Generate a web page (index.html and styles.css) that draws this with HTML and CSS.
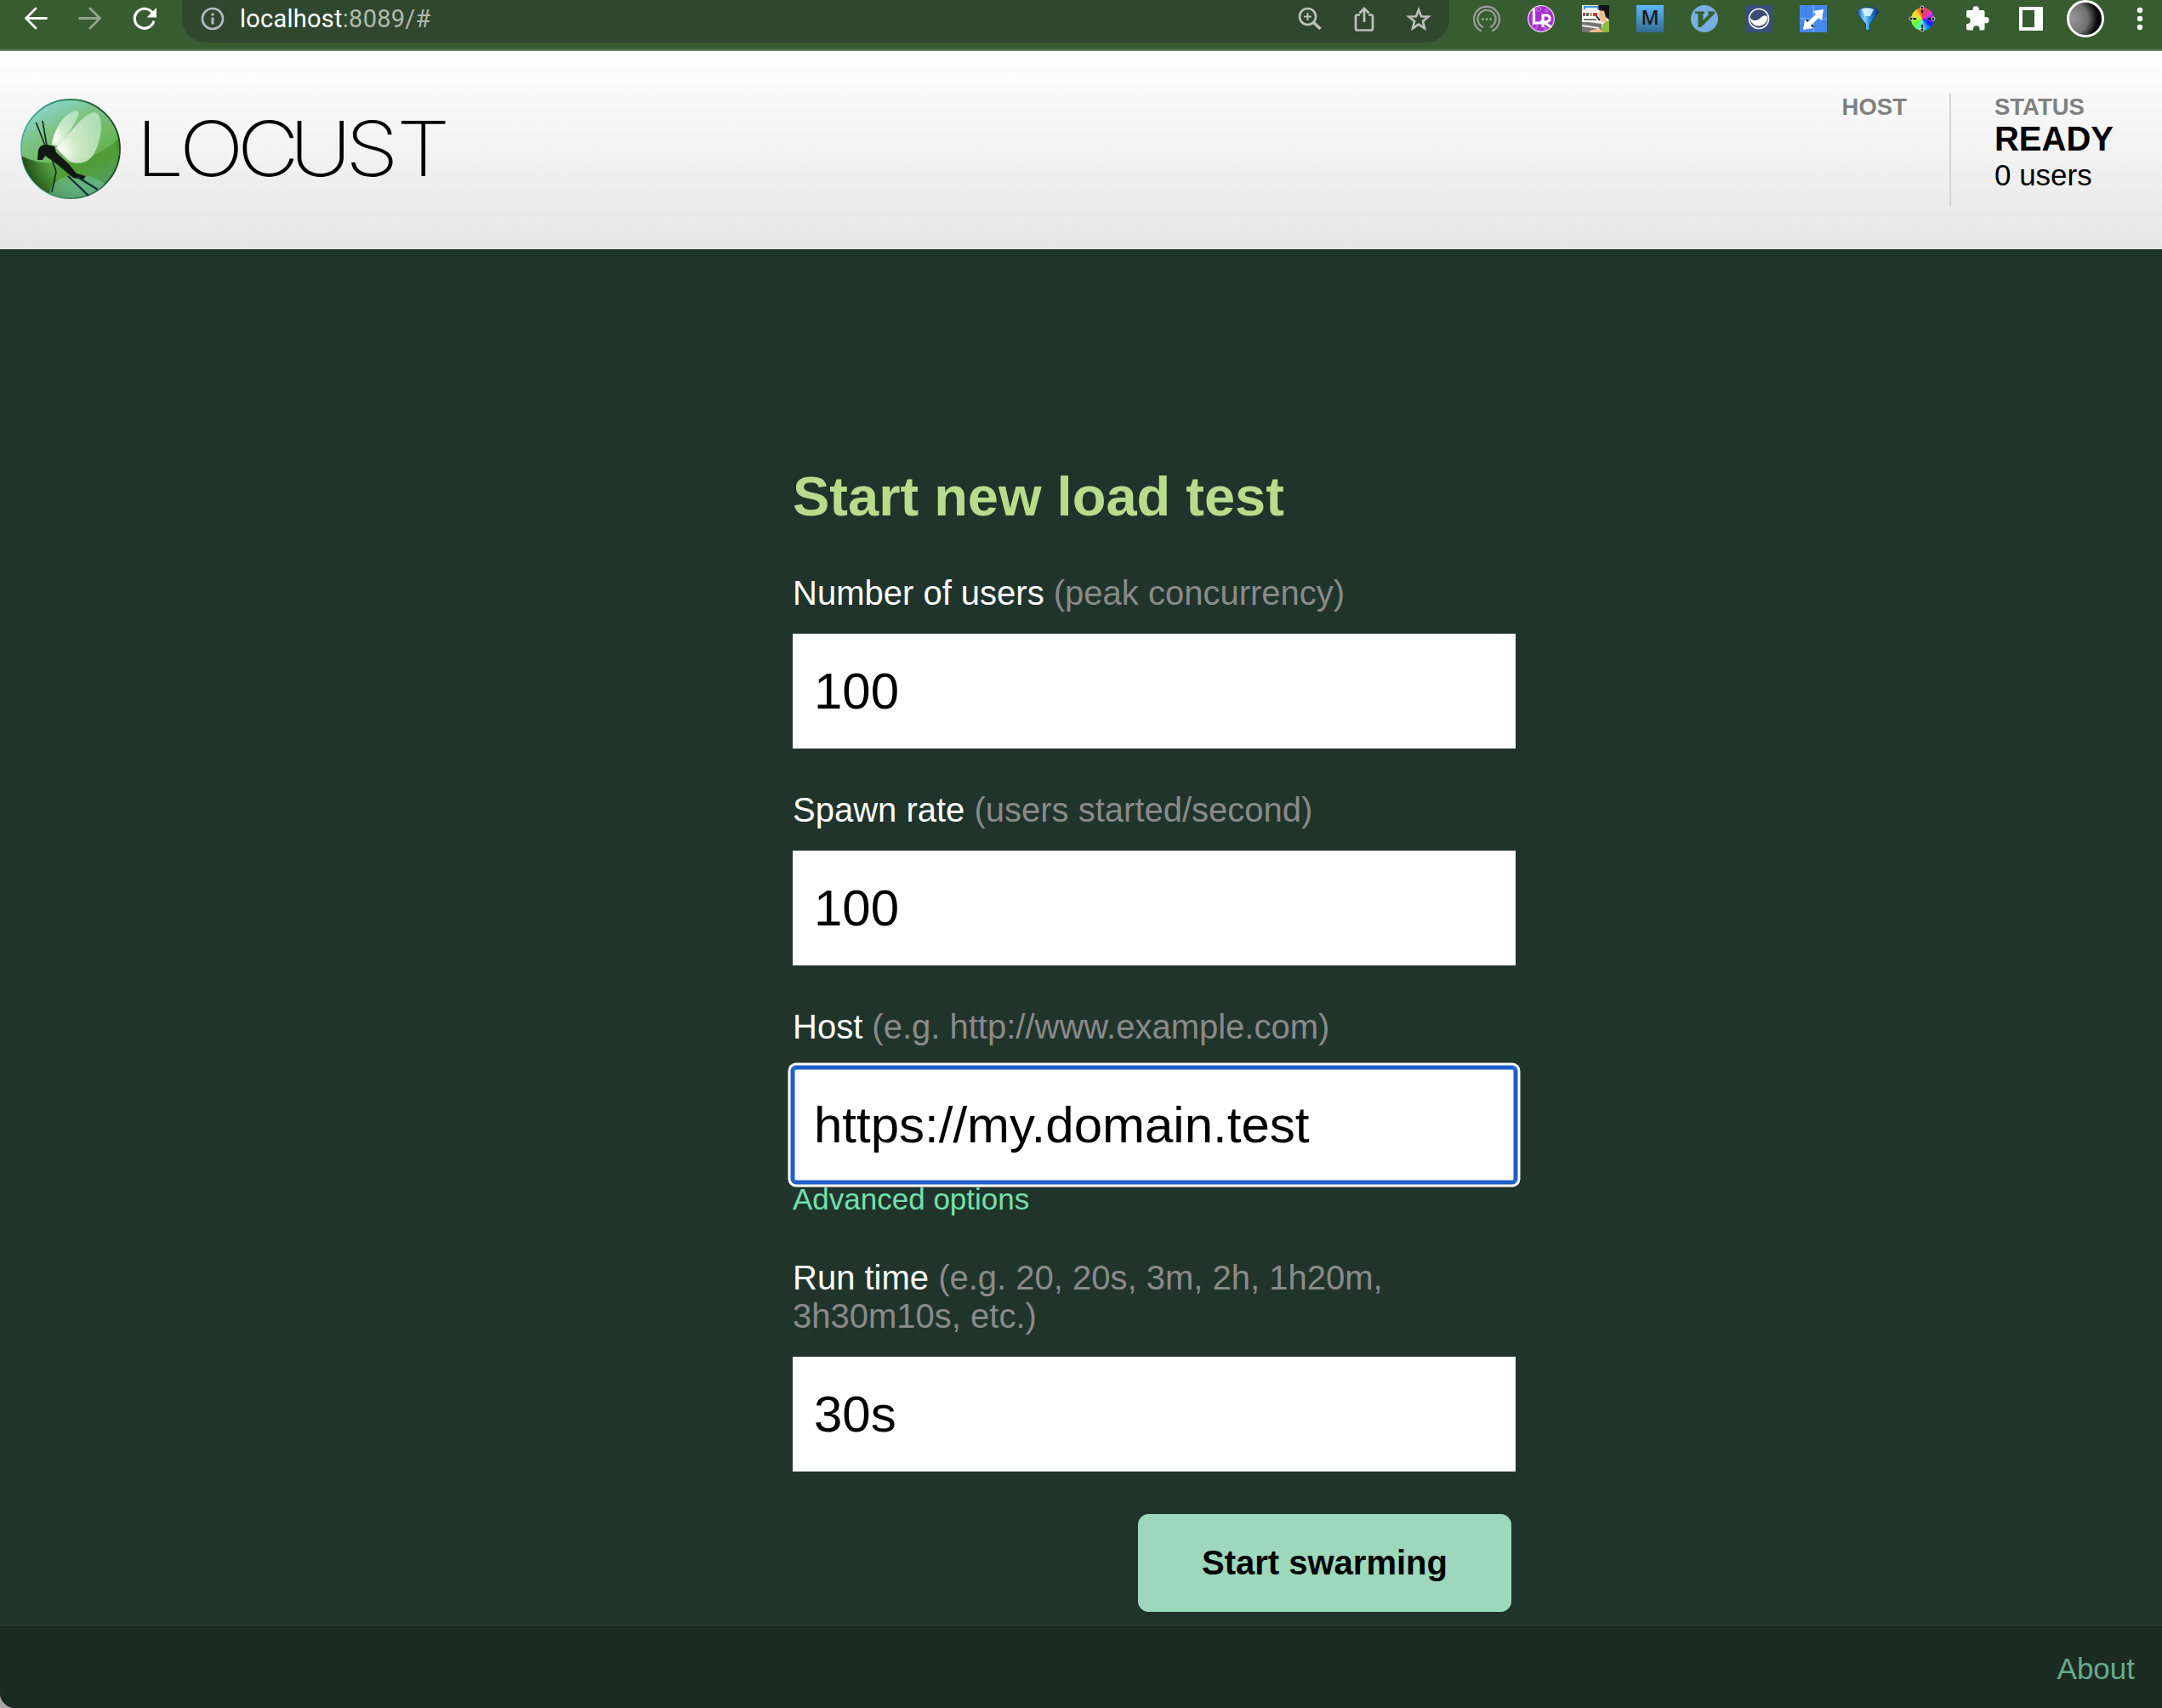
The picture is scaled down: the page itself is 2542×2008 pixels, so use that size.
FILE: index.html
```html
<!DOCTYPE html>
<html lang="en">
<head>
<meta charset="utf-8">
<title>Locust</title>
<link rel="stylesheet" href="styles.css">
</head>
<body>
<div class="page">
  <div class="toolbar">
    <nav class="nav">
      <svg class="ico" viewBox="0 0 64 44"><path class="line" d="M44.500 21.500H20.500M32 10L20.500 21.500L32 33"/></svg>
      <svg class="ico dim" viewBox="0 0 64 44"><path class="line" d="M19.500 21.500H43.500M32 10L43.500 21.500L32 33"/></svg>
      <svg class="ico" viewBox="0 0 64 44"><path d="M42.500 26A11.500 11.500 0 1 1 40.500 14.200" fill="none" stroke="#fff" stroke-width="3.200" stroke-linecap="round"/><path d="M46 9V20.500H34.500Z" fill="#fff"/></svg>
    </nav>
    <div class="address">
      <svg class="info" viewBox="0 0 28 28"><circle cx="14" cy="14" r="12" fill="none" stroke="#b5bac1" stroke-width="2.700"/><path d="M14 7.500V10.500M14 12.500V20.500" stroke="#b5bac1" stroke-width="3"/></svg>
      <span class="url">localhost<span class="port">:8089/#</span></span>
      <svg class="ico" viewBox="0 0 64 44"><g fill="none" stroke="#bdc1bd" stroke-width="2.600"><circle cx="29.500" cy="19.500" r="9.500"/><path d="M29.500 15V24M25 19.500H34" stroke-width="2"/><path d="M36.500 26.500L44.500 34" stroke-width="3.600"/></g></svg>
      <svg class="ico" viewBox="0 0 64 44"><path d="M27 17.500H24Q22 17.500 22 19.500V33.500Q22 35.500 24 35.500H40Q42 35.500 42 33.500V19.500Q42 17.500 40 17.500H37M32 26V10.500M26.500 15.500L32 10L37.500 15.500" fill="none" stroke="#bdc1bd" stroke-width="2.700"/></svg>
      <svg class="ico" viewBox="0 0 64 44"><path d="M32 11.500L35 19.300L43.400 19.700L36.900 25L39 33.200L32 28.600L25 33.200L27.100 25L20.600 19.700L29 19.300Z" fill="none" stroke="#bdc1bd" stroke-width="2.600"/></svg>
    </div>
    <div class="extensions">
      <svg class="ico" viewBox="0 0 64 44"><g fill="none" stroke="#979c95" stroke-width="2.300"><path d="M26 36.500A15 15 0 1 1 38 36.500"/><path d="M28 32A10.500 10.500 0 1 1 36 32"/></g><g fill="#979c95"><circle cx="27.500" cy="22.500" r="1.500"/><circle cx="32" cy="22.500" r="1.500"/><circle cx="36.500" cy="22.500" r="1.500"/></g></svg>
      <svg class="ico" viewBox="0 0 64 44"><circle cx="32" cy="22" r="15.300" fill="#a52ed0" stroke="#e6cdec" stroke-width="1.300"/><g fill="none" stroke="#d28ae6"><circle cx="29" cy="11" r="2.500"/><circle cx="38.500" cy="12.500" r="1.500"/><circle cx="24.500" cy="31" r="3"/><circle cx="37" cy="33.500" r="1.500"/></g><path d="M23.500 10V27H35M34 32V18H39Q43 19 42 23Q41 26 35 26L44 32" fill="none" stroke="#fff" stroke-width="3.200"/></svg>
      <svg class="ico" viewBox="0 0 64 44"><path fill="#eee9d7" d="M16 6H48V38H16Z"/><path fill="#727572" d="M16 25L39 28V38H16Z"/><path fill="#ececec" d="M16 29L36 32V34L16 31Z"/><path fill="#3c8fe0" d="M18 7H36V11H18Z"/><path fill="#fff" d="M20 9H34V12H20ZM16 13H36V26H16Z"/><path d="M17 17H20" stroke="#e33" stroke-width="4"/><path d="M21 17H24" stroke="#27a" stroke-width="4"/><path d="M25 17H28" stroke="#e93" stroke-width="4"/><path d="M29 17H34" stroke="#d33" stroke-width="4"/><path d="M18 23H33" stroke="#777" stroke-width="2"/><path fill="#f2bd91" d="M37 12H45V27L39 25L36 20Z"/><path fill="#151515" d="M35 6H48V23L44 20L42 13L36 12Z"/><path fill="#8dbc3f" d="M48 23V38H38L41 28Z"/><path fill="#f2bd91" d="M25 36L37 33L40 38H25Z"/><path d="M33 19L37 24" stroke="#222" stroke-width="2"/></svg>
      <svg class="ico" viewBox="0 0 64 44"><defs><linearGradient id="mblue" x2="0" y2="1"><stop stop-color="#5cb8f8"/><stop offset="1" stop-color="#346a91"/></linearGradient></defs><path fill="url(#mblue)" d="M16 6H48V38H16Z"/><text x="32" y="29" class="m-letter">M</text></svg>
      <svg class="ico" viewBox="0 0 64 44"><circle cx="32" cy="22" r="16" fill="#77aedf"/><path d="M21 13.500H32V16H30.500V24L38 16H36V13.500H44V16L28 32H24.500V16H21Z" fill="#375c2f"/></svg>
      <svg class="ico" viewBox="0 0 64 44"><rect x="16" y="6" width="32" height="32" rx="1" fill="#394d77"/><circle cx="32" cy="22" r="11.500" fill="#394d77" stroke="#fff" stroke-width="1.600"/><path d="M21.800 21C27 27 32 23 35 20Q39 16.500 42.200 20A10.400 10.400 0 0 1 21.800 23Z" fill="#fff"/></svg>
      <svg class="ico" viewBox="0 0 64 44"><path fill="#4588ed" d="M16 6H48V38H16Z"/><path d="M32 6V38M16 22H48" stroke="#8eb8fa" stroke-width="1"/><path d="M24 23L28 29M28 28L32 32M34 14L37 17" stroke="#111" stroke-width="2"/><path fill="#fff" d="M44 11L42 24L38.500 21L29 30L32 33L20 35L22 23L25.500 26L35 17L31.500 13Z"/></svg>
      <svg class="ico" viewBox="0 0 64 44"><defs><linearGradient id="funnel"><stop stop-color="#0753a5"/><stop offset=".35" stop-color="#88d5ff"/><stop offset=".6" stop-color="#258ae0"/><stop offset="1" stop-color="#07386e"/></linearGradient></defs><path fill="url(#funnel)" stroke="#173e66" d="M19.500 13Q22 8.500 32 8.500Q42 8.500 44.500 13Q45 17 34.500 28V35Q32 36.500 29.500 35V28Q19 17 19.500 13Z"/><path d="M25 11Q32 8 39 11L35 19H29Z" fill="#e8f7ff" opacity=".85"/></svg>
      <div class="ico wheel-cell"><span class="wheel"></span><svg class="handles" viewBox="0 0 64 44"><path d="M32 7V15M32 29V37M17 22H25M39 22H47" stroke="#111" stroke-width="2"/><g fill="#111" stroke="#e7dfe0" stroke-width="1"><circle cx="32" cy="9" r="2"/><circle cx="32" cy="35" r="2"/><circle cx="19" cy="22" r="2"/><circle cx="45" cy="22" r="2"/></g></svg></div>
      <svg class="ico" viewBox="0 0 64 44"><path fill="#fff" d="M20.500 12H27.500V11A3.500 3.500 0 0 1 34.800 11V12H39.500Q41.500 12 41.500 14V20H43A3.600 3.600 0 0 1 43 27.300H41.500V33.500Q41.500 35.500 39.500 35.500H35.500V34A3.600 3.600 0 0 0 28 34V35.500H22Q20 35.500 20 33.500V28H21.500A3.800 3.800 0 0 0 21.500 20.500H20V14Z"/></svg>
      <svg class="ico" viewBox="0 0 64 44"><path fill="#fff" fill-rule="evenodd" d="M18 8H46V36H18ZM22 12V32H36V12Z"/></svg>
      <svg class="ico" viewBox="0 0 64 44"><defs><radialGradient id="moon" cx=".12" cy=".5" r=".9"><stop stop-color="#999"/><stop offset=".5" stop-color="#707070"/><stop offset=".8" stop-color="#080808"/><stop offset="1" stop-color="#000"/></radialGradient></defs><circle cx="32" cy="22" r="20.500" fill="url(#moon)" stroke="#fff" stroke-width="3"/></svg>
      <svg class="ico menu" viewBox="0 0 58 44"><g fill="#fff"><circle cx="32" cy="12" r="3.200"/><circle cx="32" cy="22" r="3.200"/><circle cx="32" cy="32" r="3.200"/></g></svg>
    </div>
  </div>

  <header class="header">
    <svg class="logo" viewBox="0 0 540 130">
      <defs>
        <linearGradient id="ball" x1=".2" y1="0" x2=".7" y2="1"><stop stop-color="#8ed8df"/><stop offset=".3" stop-color="#7dc383"/><stop offset=".7" stop-color="#64b04c"/><stop offset="1" stop-color="#62b596"/></linearGradient>
        <radialGradient id="shade" gradientUnits="userSpaceOnUse" cx="97" cy="72" r="78"><stop offset=".5" stop-color="#123c08" stop-opacity="0"/><stop offset="1" stop-color="#0c3408" stop-opacity=".95"/></radialGradient>
        <linearGradient id="rim"><stop stop-color="#4cb0a0"/><stop offset=".5" stop-color="#2f8054"/><stop offset="1" stop-color="#16401e"/></linearGradient>
        <radialGradient id="wing" cx=".1" cy=".75" r=".95"><stop stop-color="#fff"/><stop offset=".4" stop-color="#dff3d6" stop-opacity=".85"/><stop offset="1" stop-color="#c8ecd0" stop-opacity=".7"/></radialGradient>
        <clipPath id="disc"><circle cx="83" cy="65" r="58"/></clipPath>
      </defs>
      <circle cx="83" cy="65" r="58" fill="url(#ball)" stroke="url(#rim)" stroke-width="1.800"/>
      <g clip-path="url(#disc)">
        <path d="M24 73Q50 86 83 80Q120 74 142 50V124H24Z" fill="#348016" opacity=".4"/>
        <path d="M24 73Q50 86 83 80Q120 74 142 50V124H24Z" fill="url(#shade)"/>
        <ellipse cx="93" cy="116" rx="34" ry="20" fill="#71c5a5" opacity=".5"/>
        <path d="M61 60C63 42 76 22 90 20C96 22 92 30 70 62Z" fill="url(#wing)"/>
        <path d="M66 64C82 48 96 24 111 22C122 24 121 50 112 68C105 82 94 84 82 80Z" fill="url(#wing)"/>
      </g>
      <path d="M44 78L45 66Q48 59 55 60L64 62L66 69L81 83L90 94L101 97L98 101L86 99L67 83L53 73L50 78Z" fill="#111713"/>
      <path d="M53 61L42.500 34M55 61L50 32M61 77L66 92L61 116" fill="none" stroke="#182c23" stroke-width="1.700"/>
      <path d="M80 97L104 120M91 98L115 113" stroke="#152f36" stroke-width="2.400"/>
      <text class="wordmark" transform="scale(1.12 1)" y="97" x="168 222 281.500 336.500 390.500 444.500">LOCUST</text>
    </svg>
    <div class="stats">
      <div class="stat host"><div class="stat-label">HOST</div></div>
      <div class="stat"><div class="stat-label">STATUS</div><div class="state">READY</div><div class="users">0 users</div></div>
    </div>
  </header>

  <main class="main">
    <form class="form">
      <h2>Start new load test</h2>
      <label for="users">Number of users <span>(peak concurrency)</span></label>
      <input id="users" type="text" value="100">
      <label for="rate">Spawn rate <span>(users started/second)</span></label>
      <input id="rate" type="text" value="100">
      <label for="host">Host <span>(e.g. http://www.example.com)</span></label>
      <input id="host" class="focused" type="text" value="https://my.domain.test" spellcheck="false">
      <a class="advanced">Advanced options</a>
      <label for="time">Run time <span>(e.g. 20, 20s, 3m, 2h, 1h20m, 3h30m10s, etc.)</span></label>
      <input id="time" type="text" value="30s" spellcheck="false">
      <button type="button">Start swarming</button>
    </form>
  </main>

  <footer class="footer"><a>About</a></footer>
</div>
</body>
</html>
```
FILE: styles.css
```css
* { box-sizing: border-box; }
html { background: #a5a5a5; }
body { margin: 0; font-family: "Liberation Sans", Arial, sans-serif; }

.page {
  display: flex;
  flex-direction: column;
  height: 2008px;
  overflow: hidden;
  background: #20342c;
  border-bottom-left-radius: 18px;
}

/* browser toolbar */
.toolbar {
  display: flex;
  flex: none;
  height: 60px;
  background: #375c2f;
  border-bottom: 2px solid #64835f;
}
.nav, .extensions { display: flex; }
.nav { padding: 0 12px 0 10px; }
.ico { flex: none; display: block; width: 64px; height: 44px; }
.menu { width: 58px; }
.dim { opacity: .45; }
.line { fill: none; stroke: #fff; stroke-width: 2.8; stroke-linecap: round; stroke-linejoin: round; }
.address {
  display: flex;
  width: 1490px;
  height: 50px;
  padding: 0 4px 0 22px;
  background: #2f472c;
  border-radius: 0 0 28px 28px / 0 0 28px 28px;
}
.info { width: 28px; height: 28px; margin-top: 8px; }
.url {
  flex: 1;
  padding-left: 18px;
  color: #fff;
  font: 29px/45px Roboto, sans-serif;
  letter-spacing: .25px;
}
.port { color: #afbaad; }
.extensions { padding-left: 12px; }
.m-letter { font: 600 23px "Open Sans", sans-serif; text-anchor: middle; fill: #1a1a1a; }
.wheel-cell { display: grid; place-items: center; }
.wheel, .handles { grid-area: 1 / 1; }
.wheel {
  width: 27px;
  height: 27px;
  border-radius: 50%;
  background: conic-gradient(#f33, #e43ccb 50deg, #8228ee 85deg, #002bff 125deg, #32bdf5 165deg, #5bf5bd 195deg, #5dfa37 240deg, #c7ef3f 280deg, #ffd52e 315deg, #f33);
}
.handles { width: 64px; height: 44px; }

/* page header */
.header {
  display: flex;
  flex: none;
  justify-content: space-between;
  height: 233px;
  padding: 50px 57px 0 0;
  background: linear-gradient(#fff, #e6e6e6);
}
.logo { width: 540px; height: 130px; }
.wordmark { font: 250 90px Inter, sans-serif; text-anchor: middle; fill: #000; }
.stats { display: flex; height: 133px; }
.stat { padding: 0 0 0 51px; }
.host { padding: 0 50px 0 0; border-right: 2px solid #d5d5d5; }
.stat-label { font-size: 27.5px; font-weight: bold; line-height: 31px; color: #808080; }
.state { font-size: 40px; font-weight: bold; line-height: 45px; }
.users { font-size: 35px; line-height: 40px; }

/* form */
.main { flex: 1; padding: 253px 0 0 932px; }
.form { display: flex; flex-direction: column; width: 850px; }
h2 { margin: 0 0 4px; font-size: 65px; line-height: 75px; color: #b8dc8a; }
label { margin-top: 50px; font-size: 40px; line-height: 45px; color: #fff; }
label span { color: #8a8a8a; }
input {
  height: 135px;
  margin: 25px 0 0;
  padding: 0 25px;
  border: 0;
  background: #fff;
  color: #000;
  font: 60px "Liberation Sans", Arial, sans-serif;
}
.focused {
  border-radius: 4px;
  box-shadow: inset 0 0 0 2.5px #1f5fc9, 0 0 0 2.5px #1f5fc9, 0 0 0 5.5px #fff;
}
.advanced { font-size: 35px; line-height: 40px; color: #74e0aa; }
button {
  align-self: flex-end;
  width: 439px;
  height: 115px;
  margin: 50px 5px 0 0;
  border: 0;
  border-radius: 12.5px;
  background: #9dd8bc;
  color: #000;
  font: bold 40px "Liberation Sans", Arial, sans-serif;
}

.footer {
  display: flex;
  flex: none;
  justify-content: flex-end;
  height: 96px;
  padding: 30px 32px 0 0;
  background: #1b2a23;
  color: #68a98c;
  font-size: 35px;
  line-height: 40px;
}
```
